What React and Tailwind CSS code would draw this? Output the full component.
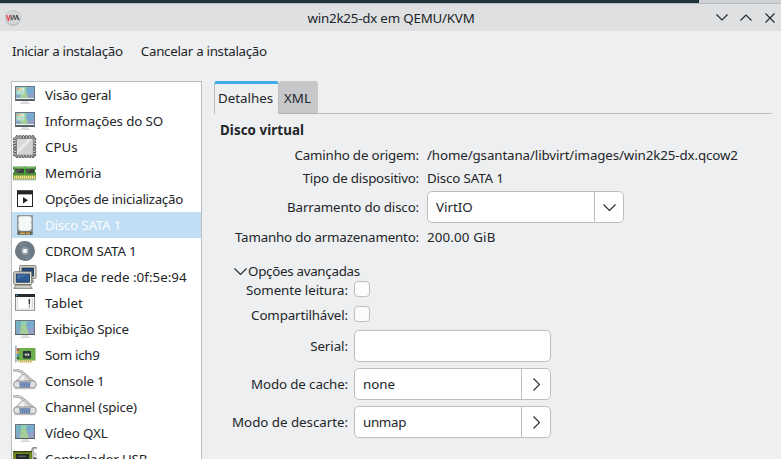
import React from 'react';

function Icon({ children }) {
  return (
    <svg className="block h-6 w-6 shrink-0" viewBox="0 0 24 24">
      {children}
    </svg>
  );
}

function Monitor({ windowed }) {
  return (
    <Icon>
      <rect x="9" y="18" width="6" height="2" fill="#e0e3e4" />
      <rect x="7" y="19.8" width="10" height="1.1" fill="#cfd2d3" />
      <rect x="2" y="3" width="20" height="15" fill="#6d767c" />
      <rect x="2" y="17" width="20" height="1" fill="#555d62" />
      <rect x="3" y="4" width="18" height="13" fill="#86b7c0" />
      <path d="M3 4h5l1 5-6 4z" fill="#74b3c4" />
      <path d="M3 12l5-3 1 8H3z" fill="#86a9c4" />
      <path d="M8 4h7l-2 5-5 1z" fill="#8fcfae" />
      <path d="M8 9l5-2 3 10H7z" fill="#a6cf97" />
      <path d="M14 4h7v7l-6 2-2-5z" fill="#79aad2" />
      <path d="M21 10v7h-5l-2-5z" fill="#93a0c6" />
      {windowed && (
        <>
          <rect x="3.5" y="4.5" width="8" height="7" fill="#b9dfcf" />
          <rect x="4" y="5" width="1.8" height="2" fill="#ef9d6c" />
          <rect x="6.5" y="5" width="1.8" height="2" fill="#f6d778" />
          <rect x="9" y="5" width="1.8" height="2" fill="#e8f0e0" />
          <rect x="3" y="15" width="18" height="1" fill="#eef1f2" />
          <rect x="3" y="16" width="18" height="1" fill="#59636b" />
        </>
      )}
    </Icon>
  );
}

function Cpu() {
  return (
    <Icon>
      <g fill="none" stroke="#5b5e60" strokeWidth="1.1">
        {[4, 7.2, 10.4, 13.6, 16.8, 20].map((p) => (
          <g key={p}>
            <path d={`M${p - 1} 3.5V1.6q0-1 1-1t1 1v1.9`} />
            <path d={`M${p - 1} 19.8v1.6q0 1 1 1t1-1v-1.6`} />
            <path d={`M3.5 ${p - 1}H1.4q-.9 0-.9 .9t.9 .9h2.1`} />
            <path d={`M19.8 ${p - 1}h2q.9 0 .9 .9t-.9 .9h-2`} />
          </g>
        ))}
      </g>
      <rect x="3" y="3" width="17.5" height="17.5" rx="1" fill="#808283" />
      <rect x="4" y="4" width="15.5" height="15.5" fill="#e8e8e8" />
      <path d="M19.5 4v15.5H4z" fill="#d2d2d2" />
      <path d="M4 4h11L4 15z" fill="#d8d8d8" />
    </Icon>
  );
}

function Memory() {
  return (
    <Icon>
      <rect x="0" y="18.5" width="23" height="1.4" fill="#dedede" />
      <path d="M0 5.5h23v3.2h-1v2.5h1V18.5H0v-7.3h1V8.7H0z" fill="#4b8f3c" />
      <rect x="1" y="6.2" width="21" height="1" fill="#8abf78" />
      <rect x="2.5" y="8" width="8.5" height="4" fill="#3c3f3c" />
      <rect x="12.6" y="8" width="8.5" height="4" fill="#3c3f3c" />
      <path d="M2.5 12l4-4M12.6 12l4-4" stroke="#77867a" />
      <rect x="11" y="6" width="1.3" height="9" fill="#35b72f" />
      <rect x="0.6" y="14.5" width="22" height="3.4" fill="#c3b540" />
      <path d="M1 16.2h21" stroke="#e9e4a0" strokeWidth="3" strokeDasharray="1 1" />
    </Icon>
  );
}

function Boot() {
  return (
    <Icon>
      <rect x="4.5" y="4" width="15" height="15.5" fill="#fff" stroke="#232629" />
      <rect x="4" y="3.4" width="16" height="4" fill="#232629" />
      <path d="M10 10v6.4l5-3.2z" fill="#232629" />
    </Icon>
  );
}

function Disk() {
  return (
    <Icon>
      <rect x="4" y="2" width="16" height="20" rx="0.8" fill="#91979b" />
      <rect x="4.6" y="18.4" width="14.8" height="3.2" fill="#5f666b" />
      <path d="M7 3.2h10l1.5 1.5v4l-.6 1 .6 1v5l-2 2h-9l-2-2v-5l.6-1-.6-1v-4z" fill="#f6f7f7" />
      <rect x="7" y="19.6" width="5" height="1.5" fill="#f0a02e" />
      <rect x="13" y="19.6" width="4" height="1.5" fill="#f0a02e" />
    </Icon>
  );
}

function Cd() {
  return (
    <Icon>
      <circle cx="12" cy="12" r="10" fill="#6c7a86" />
      <path d="M12 12L4.6 5.2A10 10 0 0 1 12 2z" fill="#74828d" />
      <path d="M12 12l7.4 6.8A10 10 0 0 1 12 22z" fill="#74828d" />
      <circle cx="12" cy="12" r="4" fill="#929da6" />
      <rect x="10" y="10" width="4" height="4" rx="1" fill="#f4f5f5" />
    </Icon>
  );
}

function Network() {
  return (
    <Icon>
      <path d="M11 14h9l1.5 3.4H11z" fill="#a3a49c" />
      <rect x="6.6" y="0.6" width="16.4" height="12.8" rx="1" fill="#d9dad1" stroke="#7b7d75" />
      <rect x="9" y="3" width="11.6" height="8" fill="#234a83" stroke="#2a2f38" strokeWidth="0.8" />
      <path d="M3 20h14l2.3 3.4H.7z" fill="#cfd0c6" stroke="#73756c" strokeWidth="0.8" />
      <rect x="0.8" y="6.8" width="18" height="12.8" rx="1" fill="#e3e4dc" stroke="#6c6e66" />
      <rect x="3.2" y="9" width="13.2" height="8.2" fill="#2d5a98" stroke="#1d2c44" strokeWidth="0.8" />
      <path d="M4 9.6h11.6L4 14z" fill="#4670a8" />
    </Icon>
  );
}

function Tablet() {
  return (
    <Icon>
      <rect x="2" y="3" width="20" height="16.8" fill="#8a9094" />
      <rect x="2" y="3" width="20" height="3" fill="#272c33" />
      <rect x="3" y="4" width="1.3" height="1" fill="#4aa3df" />
      <rect x="3" y="6" width="18" height="12.8" fill="#f2f3f3" />
      <rect x="5" y="8" width="12" height="9" fill="#fff" />
      <path d="M4.5 7.4V17" stroke="#d9dbdd" />
      <path d="M16.3 8v5" stroke="#2c3033" strokeWidth="1.3" />
      <path d="M16.3 13v4" stroke="#8e9396" />
      <path d="M19.5 8v9" stroke="#d5d8da" />
    </Icon>
  );
}

function SoundCard() {
  return (
    <Icon>
      <rect x="4" y="5" width="18.5" height="12.6" fill="#6fae4c" />
      <rect x="5.5" y="17.6" width="13" height="1.8" fill="#cda84e" />
      <path d="M6 18.5h12" stroke="#f0dfa4" strokeWidth="1.8" strokeDasharray="1 1" />
      <rect x="2" y="2.6" width="1.7" height="17" fill="#a3b5be" />
      <rect x="3.7" y="5.6" width="2.4" height="2" fill="#d8404f" />
      <rect x="3.7" y="8.4" width="2.4" height="2" fill="#e8a33a" />
      <rect x="3.7" y="11.2" width="2.4" height="2" fill="#3d8fd1" />
      <rect x="3.7" y="14" width="2.4" height="2" fill="#2e6e39" />
      <rect x="10" y="8" width="8" height="7.4" rx="0.8" fill="#2c3533" />
      <path d="M11.6 11.7h2.6M12.9 10.2v3" stroke="#dfe3e2" strokeWidth="0.9" fill="none" />
      <path d="M14.6 10v3.4l2.2-1.7z" fill="#dfe3e2" />
    </Icon>
  );
}

function Serial() {
  return (
    <Icon>
      <path d="M1.5 19.6h21" stroke="#d9d9d9" strokeWidth="1.6" />
      <path d="M9.5 5.2q2-1.6 4 .2l7.8 7H2.6z" fill="#dcdcdc" stroke="#989898" strokeWidth="0.8" />
      <path d="M10.2 6.4l-4.6 6h6.2z" fill="#f4f4f4" />
      <path d="M12.4 6.2l6 6" stroke="#adadad" strokeWidth="1.1" />
      <path d="M0 1.1c5.4-.4 9 .8 11.6 4.4" fill="none" stroke="#a0a0a0" strokeWidth="2.8" />
      <path d="M0 1c5.4-.4 8.600.8 11.200 4.200" fill="none" stroke="#dedede" strokeWidth="1.1" />
      <path d="M3.2 12h17.4q2.2.4 2.4 2.4v2.2q-.2 2-2.4 2.2H3.2Q1 18.6.8 16.6v-2.2Q1 12.4 3.2 12z" fill="#e0e0e0" stroke="#808080" strokeWidth="0.9" />
      <path d="M6.2 13.2h11.4l-.8 5H7z" fill="#5f7398" />
      <path d="M7.2 14.8h9.6M8 16.9h8" stroke="#8fbcf5" strokeWidth="1.3" strokeDasharray="1.2 0.9" />
    </Icon>
  );
}

function Controller() {
  return (
    <Icon>
      <path d="M19.5 24V3q0-2 2-2H24" fill="none" stroke="#777a77" strokeWidth="2.2" />
      <path d="M19.6 24V3.2q0-2 2-2H24" fill="none" stroke="#d5d7d4" strokeWidth="0.9" />
      <path d="M0 4h19v17H0z" fill="#6f8722" />
      <path d="M0 4h19v1.3H0z" fill="#39470f" />
      <rect x="3" y="7" width="13" height="5" fill="#25282a" />
      <rect x="5" y="8.6" width="8" height="1.4" fill="#5b6468" />
      <rect x="20.6" y="5.5" width="3" height="4" fill="#d0d2cf" />
      <rect x="20.6" y="10.5" width="3" height="4" fill="#3a3d3a" />
    </Icon>
  );
}

const devices = [
  ['Visão geral', <Monitor windowed />, 'tracking-[-0.22px]'],
  ['Informações do SO', <Monitor windowed />, 'tracking-[-0.12px]'],
  ['CPUs', <Cpu />, ''],
  ['Memória', <Memory />, ''],
  ['Opções de inicialização', <Boot />, 'tracking-[-0.29px]'],
  ['Disco SATA 1', <Disk />, 'tracking-[-0.2px]'],
  ['CDROM SATA 1', <Cd />, 'tracking-[-0.15px]'],
  ['Placa de rede :0f:5e:94', <Network />, 'tracking-[0.04px]'],
  ['Tablet', <Tablet />, ''],
  ['Exibição Spice', <Monitor />, 'tracking-[-0.3px]'],
  ['Som ich9', <SoundCard />, 'tracking-[-0.3px]'],
  ['Console 1', <Serial />, 'tracking-[-0.2px]'],
  ['Channel (spice)', <Serial />, 'tracking-[-0.21px]'],
  ['Vídeo QXL', <Monitor />, 'tracking-[-0.1px]'],
  ['Controlador USB', <Controller />, 'tracking-[-0.17px]'],
];

function Chevron({ d, className }) {
  return (
    <svg className={`block shrink-0 ${className}`} fill="none" stroke="#232629" strokeWidth="1.1">
      <path d={d} />
    </svg>
  );
}

function Combo({ value, children }) {
  return (
    <div className="flex h-8 w-[197px] items-stretch rounded-[5px] border border-[#bcbebf] bg-white">
      <div className="flex flex-1 items-center pl-2">{value}</div>
      <div className="flex w-[29px] items-center justify-center border-l border-[#bcbebf]">{children}</div>
    </div>
  );
}

function Field({ label, wide, className, track = '', children }) {
  return (
    <div className={`flex items-center ${className}`}>
      <div className={`text-right ${track} ${wide ? 'w-[205px]' : 'w-[134px]'}`}>{label}</div>
      <div className={wide ? 'ml-2' : 'ml-[6px]'}>{children}</div>
    </div>
  );
}

const down = 'M0.5 0.5L6.5 6.5L12.5 0.5';
const right = 'M0.5 0.5L6.5 6.5L0.5 12.5';

export default function App() {
  return (
    <div className="flex h-[459px] w-[781px] flex-col overflow-hidden bg-[#eeeff1] font-['Noto_Sans',sans-serif] text-[13.333px] leading-[18px] whitespace-nowrap text-[#232629]">
      <div className="flex h-[3px] shrink-0 bg-[#d0d1d2]">
        <div className="w-[699px] bg-[#20323c]" />
      </div>
      <header className="flex h-7 shrink-0 items-center border-t border-[#b9bcbe] bg-[#dee0e2]">
        <svg className="ml-[5px] block h-4 w-4" viewBox="0 0 16 16">
          <circle cx="8" cy="8" r="8" fill="#bfc1c3" />
          <circle cx="8" cy="7.2" r="7" fill="#d3d4d5" />
          <path d="M1.4 5l2 5 2-5" fill="none" stroke="#e8505c" strokeWidth="1.4" />
          <path d="M6.2 5v5.2M7.4 10l1.4-5 1.6 5 1.4-5 1.5 5M11.6 5l2.6 5" fill="none" stroke="#4a4d4f" strokeWidth="1" />
        </svg>
        <div className="flex-1 pl-[45px] text-center tracking-[-0.2px]">win2k25-dx em QEMU/KVM</div>
        <div className="flex items-center pr-[6px]">
          <Chevron className="h-[7px] w-3" d="M0.5 0.5L6 6L11.5 0.5" />
          <Chevron className="mr-[13px] ml-3 h-[7px] w-3" d="M0.5 6.5L6 1L11.5 6.5" />
          <Chevron className="h-[10px] w-[10px]" d="M0.5 0.5L9.5 9.5M9.5 0.5L0.5 9.5" />
        </div>
      </header>
      <nav className="flex h-[50px] shrink-0 gap-[18px] pt-[11px] pl-3 tracking-[-0.29px]">
        <span>Iniciar a instalação</span>
        <span>Cancelar a instalação</span>
      </nav>
      <div className="flex min-h-0 flex-1">
        <ul className="ml-[11px] w-[191px] shrink-0 overflow-hidden border border-b-0 border-[#bcbebf] bg-white">
          {devices.map(([name, icon, track]) => (
            <li
              key={name}
              className={`flex h-[26px] items-center gap-2 pl-px ${
                name === 'Disco SATA 1' ? 'bg-[#c1dff4] text-[#fcfcfc]' : ''
              }`}
            >
              {icon}
              <span className={track}>{name}</span>
            </li>
          ))}
        </ul>
        <main className="ml-3 w-[558px]">
          <div className="flex h-[33px]">
            <div className="flex w-[65px] items-center rounded-t-[3px] border-x border-t-[3px] border-x-[#bcbebf] border-t-[#3daee9] pb-[2px] pl-[3px]">
              Detalhes
            </div>
            <div className="flex w-[39px] items-center rounded-t-[3px] border-b border-[#b0b2b3] bg-[#c5c7c9] pt-[2px] pl-[5px]">XML</div>
            <div className="flex-1 border-b border-[#bcbebf]" />
          </div>
          <div className="mt-[7px] pl-[6px] font-bold tracking-[0.07px]">Disco virtual</div>
          <Field wide className="mt-[7px]" track="tracking-[-0.18px]" label="Caminho de origem:">
            <span className="tracking-[-0.11px]">/home/gsantana/libvirt/images/win2k25-dx.qcow2</span>
          </Field>
          <Field wide className="mt-[5px]" track="tracking-[-0.21px]" label="Tipo de dispositivo:">
            <span className="tracking-[-0.15px]">Disco SATA 1</span>
          </Field>
          <Field wide className="mt-1" track="tracking-[-0.14px]" label="Barramento do disco:">
            <Combo value="VirtIO">
              <Chevron className="h-[7px] w-[13px]" d={down} />
            </Combo>
          </Field>
          <Field wide className="mt-[5px]" track="tracking-[-0.18px]" label="Tamanho do armazenamento:">
            <span className="tracking-[0.15px]">200.00 GiB</span>
          </Field>
          <div className="mt-4 flex items-center gap-[1px] pl-5">
            <Chevron className="h-[7px] w-[13px]" d={down} />
            <span className="tracking-[-0.28px]">Opções avançadas</span>
          </div>
          <Field className="h-[18px]" track="tracking-[-0.07px] pt-px" label="Somente leitura:">
            <div className="h-4 w-4 rounded-[4px] border border-[#bcbebf] bg-[#fcfcfc]" />
          </Field>
          <Field className="mt-[7px] h-[18px]" track="tracking-[-0.13px] pt-[2px]" label="Compartilhável:">
            <div className="h-4 w-4 rounded-[4px] border border-[#bcbebf] bg-[#fcfcfc]" />
          </Field>
          <Field className="mt-[7px]" track="tracking-[-0.06px]" label="Serial:">
            <div className="h-8 w-[197px] rounded-[5px] border border-[#bcbebf] bg-white" />
          </Field>
          <Field className="mt-[6px]" track="tracking-[-0.12px]" label="Modo de cache:">
            <Combo value="none">
              <Chevron className="h-[13px] w-[7px]" d={right} />
            </Combo>
          </Field>
          <Field className="mt-[6px]" track="tracking-[-0.03px]" label="Modo de descarte:">
            <Combo value={<span className="tracking-[-0.3px]">unmap</span>}>
              <Chevron className="h-[13px] w-[7px]" d={right} />
            </Combo>
          </Field>
        </main>
      </div>
    </div>
  );
}
